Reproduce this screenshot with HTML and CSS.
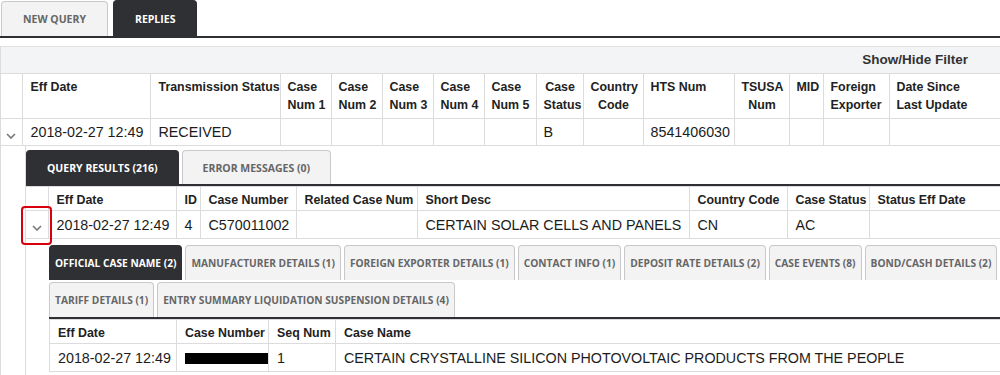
FILE: index.html
```html
<!DOCTYPE html>
<html lang="en">
<head>
<meta charset="utf-8">
<title>Replies</title>
<link rel="stylesheet" href="styles.css">
</head>
<body>
<div class="app">
  <nav class="tabs tabs-top">
    <div class="tab">NEW QUERY</div>
    <div class="tab active">REPLIES</div>
  </nav>

  <section class="panel">
    <div class="filter-bar">Show/Hide Filter</div>

    <table class="grid grid-main">
      <colgroup>
        <col class="w21"><col class="w128"><col class="w130"><col class="w51"><col class="w51"><col class="w51"><col class="w51"><col class="w52"><col class="w47"><col class="w60"><col class="w91"><col class="w55"><col class="w34"><col class="w66"><col class="w111">
      </colgroup>
      <thead>
        <tr>
          <th class="exp"></th>
          <th>Eff Date</th>
          <th>Transmission Status</th>
          <th>Case<br>Num 1</th>
          <th>Case<br>Num 2</th>
          <th>Case<br>Num 3</th>
          <th>Case<br>Num 4</th>
          <th>Case<br>Num 5</th>
          <th class="c">Case<br>Status</th>
          <th class="c">Country<br>Code</th>
          <th>HTS Num</th>
          <th class="c">TSUSA<br>Num</th>
          <th>MID</th>
          <th>Foreign<br>Exporter</th>
          <th>Date Since<br>Last Update</th>
        </tr>
      </thead>
      <tbody>
        <tr>
          <td class="exp"><svg class="chev" width="10" height="6" viewBox="0 0 10 6"><polyline points="1,1 5,5 9,1"/></svg></td>
          <td>2018-02-27 12:49</td>
          <td>RECEIVED</td>
          <td></td><td></td><td></td><td></td><td></td>
          <td>B</td>
          <td></td>
          <td>8541406030</td>
          <td></td><td></td><td></td><td></td>
        </tr>
      </tbody>
    </table>

    <div class="detail detail-l1">
      <nav class="tabs tabs-sub tabs-l1">
        <div class="tab active">QUERY RESULTS (216)</div>
        <div class="tab">ERROR MESSAGES (0)</div>
      </nav>
      <table class="grid grid-l1">
        <colgroup>
          <col class="w22"><col class="w128"><col class="w24"><col class="w96"><col class="w121"><col class="w272"><col class="w98"><col class="w82"><col class="w132">
        </colgroup>
        <thead>
          <tr>
            <th class="exp"></th>
            <th>Eff Date</th>
            <th>ID</th>
            <th>Case Number</th>
            <th>Related Case Num</th>
            <th>Short Desc</th>
            <th>Country Code</th>
            <th>Case Status</th>
            <th>Status Eff Date</th>
          </tr>
        </thead>
        <tbody>
          <tr>
            <td class="exp"><svg class="chev" width="10" height="6" viewBox="0 0 10 6"><polyline points="1,1 5,5 9,1"/></svg></td>
            <td>2018-02-27 12:49</td>
            <td>4</td>
            <td>C570011002</td>
            <td></td>
            <td>CERTAIN SOLAR CELLS AND PANELS</td>
            <td>CN</td>
            <td>AC</td>
            <td></td>
          </tr>
        </tbody>
      </table>

      <div class="detail detail-l2">
        <nav class="tabs tabs-sub tabs-l2">
          <div class="tab active">OFFICIAL CASE NAME (2)</div>
          <div class="tab">MANUFACTURER DETAILS (1)</div>
          <div class="tab">FOREIGN EXPORTER DETAILS (1)</div>
          <div class="tab">CONTACT INFO (1)</div>
          <div class="tab">DEPOSIT RATE DETAILS (2)</div>
          <div class="tab">CASE EVENTS (8)</div>
          <div class="tab">BOND/CASH DETAILS (2)</div>
          <div class="tab">TARIFF DETAILS (1)</div>
          <div class="tab">ENTRY SUMMARY LIQUIDATION SUSPENSION DETAILS (4)</div>
        </nav>
        <table class="grid grid-l2">
          <colgroup>
            <col class="w127"><col class="w92"><col class="w67"><col class="w665">
          </colgroup>
          <thead>
            <tr>
              <th>Eff Date</th>
              <th>Case Number</th>
              <th>Seq Num</th>
              <th>Case Name</th>
            </tr>
          </thead>
          <tbody>
            <tr>
              <td>2018-02-27 12:49</td>
              <td><span class="redacted"></span></td>
              <td>1</td>
              <td>CERTAIN CRYSTALLINE SILICON PHOTOVOLTAIC PRODUCTS FROM THE PEOPLE</td>
            </tr>
          </tbody>
        </table>
      </div>
    </div>
  </section>

  <div class="highlight"></div>
</div>
</body>
</html>
```

FILE: styles.css
```css
* { box-sizing: border-box; }

html, body {
  margin: 0;
  padding: 0;
  background: #fff;
  overflow: hidden;
}

body {
  width: 1000px;
  height: 375px;
  font-family: "Liberation Sans", Arial, sans-serif;
  color: #1c1c1c;
}

.app {
  position: relative;
  width: 1000px;
}

/* ---------- tabs ---------- */
.tabs {
  display: flex;
  flex-wrap: wrap;
  align-items: flex-end;
  border-bottom: 2px solid #2f3034;
  font-family: "Open Sans", "DejaVu Sans", sans-serif;
  font-weight: 700;
  font-size: 10.5px;
}

.tab {
  display: flex;
  align-items: center;
  justify-content: center;
  height: 35px;
  background: #f3f3f4;
  border: 1px solid #c9c9cb;
  border-bottom: none;
  border-radius: 4px 4px 0 0;
  color: #666;
  white-space: nowrap;
}

.tab.active {
  background: #2f3034;
  border-color: #2f3034;
  color: #fff;
}

.tabs-top {
  gap: 5px;
  padding-left: 1px;
  height: 38px;
}
.tabs-top .tab { padding: 0 21px; }
.tabs-top .tab.active { height: 36px; }

.tabs-l1 { gap: 3px; }
.tabs-l1 .tab { padding: 0 20px; height: 34px; }

.tabs-l2 { column-gap: 3px; row-gap: 2px; font-size: 10.2px; }
.tabs-l2 .tab { padding: 0 5px; }

/* ---------- panel ---------- */
.panel {
  margin-top: 8px;
  border-left: 1px solid #dcdcdc;
}

.filter-bar {
  height: 27px;
  line-height: 26px;
  border-top: 1px solid #e2e2e2;
  background: #f3f4f6;
  text-align: right;
  padding-right: 32px;
  font-weight: 700;
  font-size: 13.5px;
  color: #333;
}

/* ---------- grids ---------- */
.grid {
  border-collapse: collapse;
  table-layout: fixed;
}

.grid th,
.grid td {
  border: 1px solid #dcdcdc;
  text-align: left;
  white-space: nowrap;
  overflow: visible;
}

.grid th {
  font-weight: 700;
  font-size: 12.4px;
  color: #222;
  vertical-align: top;
}

.grid td {
  font-size: 14.3px;
  vertical-align: middle;
  color: #1c1c1c;
}

.grid th.c { text-align: center; }

.grid tr > :first-child { border-left: none; }

.grid .exp {
  padding: 3px 0 0 0;
  text-align: center;
}

.chev {
  display: inline-block;
  fill: none;
  stroke: #777;
  stroke-width: 1.6;
}

.grid-main { width: 999px; }
.grid-main th { height: 44px; padding: 4px 6px 4px 7px; line-height: 18px; }
.grid-main td { height: 27px; padding: 0 7px; }
.grid-main th:nth-child(2), .grid-main td:nth-child(2),
.grid-main th:nth-child(3), .grid-main td:nth-child(3) { padding-left: 8px; }

.detail { border-left: 1px solid #dcdcdc; }

.detail-l1 {
  margin-left: 24px;
  padding-top: 4px;
  height: 232px;
}

.grid-l1 { width: 975px; }
.grid-l1 th { height: 24px; padding: 4px 7px 0 8px; line-height: 18px; }
.grid-l1 td { height: 28px; padding: 0 7px 0 8px; }

.detail-l2 {
  margin-left: 23px;
  margin-top: 6px;
  border-left: none;
}

.grid-l2 { width: 951px; }
.grid-l2 tr > :first-child { border-left: 1px solid #dcdcdc; }
.grid-l2 th { height: 24px; padding: 4px 7px 0 8px; line-height: 18px; }
.grid-l2 td { height: 28px; padding: 0 7px 0 8px; }

.redacted {
  display: inline-block;
  width: 83px;
  height: 11px;
  background: #000;
  vertical-align: middle;
}

/* column widths */
.w21 { width: 21px; }
.w22 { width: 22px; }
.w24 { width: 24px; }
.w34 { width: 34px; }
.w47 { width: 47px; }
.w51 { width: 51px; }
.w52 { width: 52px; }
.w55 { width: 55px; }
.w60 { width: 60px; }
.w66 { width: 66px; }
.w67 { width: 67px; }
.w82 { width: 82px; }
.w91 { width: 91px; }
.w92 { width: 92px; }
.w96 { width: 96px; }
.w98 { width: 98px; }
.w111 { width: 111px; }
.w121 { width: 121px; }
.w127 { width: 127px; }
.w128 { width: 128px; }
.w130 { width: 130px; }
.w132 { width: 132px; }
.w272 { width: 272px; }
.w665 { width: 665px; }

/* annotation overlay */
.highlight {
  position: absolute;
  left: 21px;
  top: 206px;
  width: 31px;
  height: 39px;
  border: 2px solid #d9000d;
  border-radius: 4px;
}
```
